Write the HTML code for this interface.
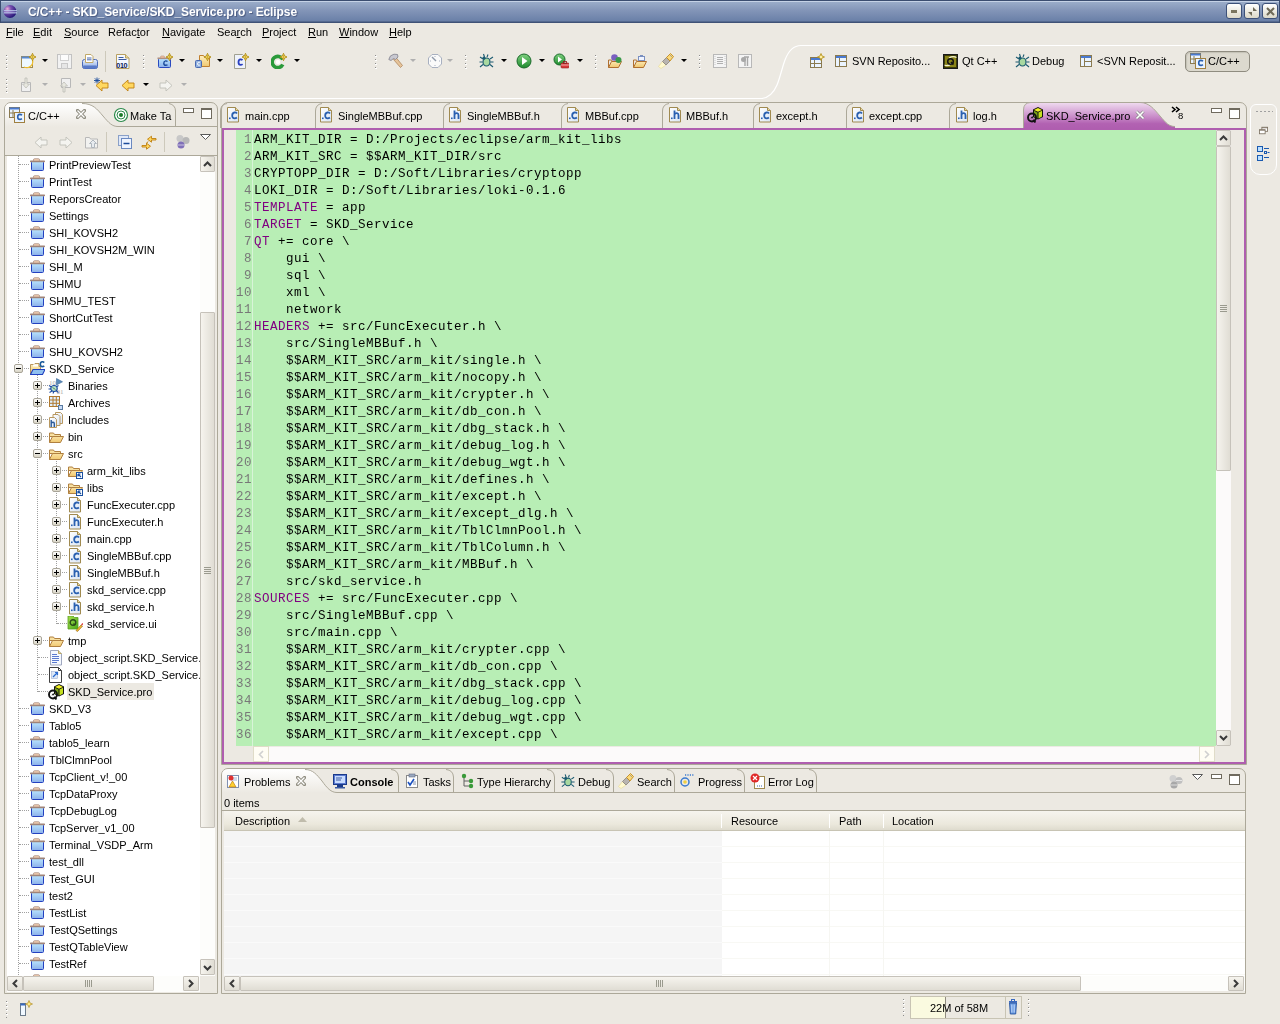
<!DOCTYPE html>
<html><head><meta charset="utf-8"><title>Eclipse</title><style>
*{margin:0;padding:0;box-sizing:border-box}
html,body{width:1280px;height:1024px;overflow:hidden;background:#ECE9E2;font-family:"Liberation Sans",sans-serif;font-size:11px;color:#000}
.a{position:absolute}
.t{position:absolute;white-space:pre;line-height:13px;will-change:transform}
.mono{font-family:"Liberation Mono",monospace;font-size:12.5px;letter-spacing:0.5px;line-height:17px}
.ln{color:#787878}
.kw{color:#800080}
.dd{position:absolute;width:0;height:0;border-left:3px solid transparent;border-right:3px solid transparent;border-top:3px solid #000}
.ddg{border-top-color:#b0b0b0}
.grip{position:absolute;width:2px;background:repeating-linear-gradient(transparent 0 1px,#8c8c8c 1px 2px,transparent 2px 4px),repeating-linear-gradient(transparent 0 2px,#fff 2px 3px,transparent 3px 4px);background-size:1px 100%,2px 100%;background-repeat:no-repeat}
.sep{position:absolute;width:1px;background:#cdc9bb}
.vbtn{position:absolute;background:linear-gradient(90deg,#f6f4ee,#e0ddd4);border:1px solid #c6c2ba;border-radius:1px}
.hbtn{position:absolute;background:linear-gradient(#f6f4ee,#e0ddd4);border:1px solid #c6c2ba;border-radius:1px}
.dots{position:absolute;border-left:1px dotted #a0a0a0}
.hdots{position:absolute;border-top:1px dotted #a0a0a0}
.minb{position:absolute;width:11px;height:5px;border:1px solid #6f6a5e;background:#fff}
.maxb{position:absolute;width:11px;height:11px;border:1px solid #6f6a5e;border-top-width:2px;background:#fff}
</style></head>
<body>
<svg width="0" height="0" style="position:absolute"><defs>
<linearGradient id="gBlue" x1="0" y1="0" x2="0" y2="1"><stop offset="0" stop-color="#b8e4ff"/><stop offset="1" stop-color="#8cb0ea"/></linearGradient>
<linearGradient id="gTan" x1="0" y1="0" x2="0" y2="1"><stop offset="0" stop-color="#fff0c0"/><stop offset="1" stop-color="#f0c870"/></linearGradient>
<linearGradient id="gPage" x1="0" y1="0" x2="1" y2="1"><stop offset="0" stop-color="#ffffff"/><stop offset="1" stop-color="#d8e4f4"/></linearGradient>
<linearGradient id="gBtn" x1="0" y1="0" x2="0" y2="1"><stop offset="0" stop-color="#ffffff"/><stop offset="1" stop-color="#d6d2c2"/></linearGradient>
<linearGradient id="gGreen" x1="0" y1="0" x2="0" y2="1"><stop offset="0" stop-color="#7fd07f"/><stop offset="1" stop-color="#1e8a2e"/></linearGradient>
<radialGradient id="gEcl" cx="0.3" cy="0.3" r="0.8"><stop offset="0" stop-color="#f0b0d8"/><stop offset="0.35" stop-color="#7a50b0"/><stop offset="1" stop-color="#1a1070"/></radialGradient>
<symbol id="proj" viewBox="0 0 16 16"><rect x="2.5" y="4.5" width="12" height="9" rx="1" fill="url(#gBlue)" stroke="#2340c0"/><rect x="1" y="3.6" width="15" height="1.6" rx="0.6" fill="#a08478"/><rect x="4.5" y="1.8" width="6" height="2.2" rx="1" fill="#fcd8b8" stroke="#a08478" stroke-width="0.8"/></symbol><symbol id="cproj" viewBox="0 0 16 16"><path d="M1.5 3.5h3.5l1-1h4v3h1.5v7.5h-10z" fill="url(#gTan)" stroke="#b08a50" stroke-width="0.9"/><path d="M4 3.5h5v2h-5z" fill="#fff"/><path d="M1.5 13.5L4 8.5H16L13.5 13.5Z" fill="#90c0f0" stroke="#2040c0" stroke-width="1.1" stroke-linejoin="round"/><path d="M15.2 1.6q-.8-.9-1.9-.8q-2 .2-2 2.5q0 2.3 2 2.3q1.1 0 1.9-.7" fill="none" stroke="#1a5a9a" stroke-width="1.6"/></symbol><symbol id="bin" viewBox="0 0 16 16"><text x="1" y="6.5" font-size="7" fill="#aaa" font-family="Liberation Serif">10</text><text x="8.5" y="15.5" font-size="7" fill="#aaa" font-family="Liberation Serif">01</text><path d="M8.5 0.5v6.5l6-3.2z" fill="#5a8ab8" stroke="#3a6a98" stroke-width="0.6"/><ellipse cx="6" cy="10.5" rx="3.2" ry="3" fill="#b8e0c8" stroke="#1a4aa0" stroke-width="1.2"/><path d="M1 7.5l2.5 1.5M0.5 11h2.5M1.5 14.5l2.5-1.5M10.5 7.5l-2 1.2M10.5 14.5l-2-1.5M5 15.5l.8-2" stroke="#1a4aa0" stroke-width="1.1"/><path d="M4.5 9.5l3 2" stroke="#508a60"/></symbol><symbol id="arch" viewBox="0 0 16 16"><rect x="1.5" y="1.5" width="10" height="10" fill="#dfeefc" stroke="#b07a30"/><path d="M5 1.5v10M8.3 1.5v10M1.5 5h10M1.5 8.3h10" stroke="#b07a30"/><rect x="10.5" y="10.5" width="4" height="4" fill="#c8dcf8" stroke="#5a7aa0"/></symbol><symbol id="inc" viewBox="0 0 16 16"><path d="M7.5 0.5h5l2 2v9h-7z" fill="url(#gPage)" stroke="#b89860"/><path d="M5 2.5h5l2 2v9H5z" fill="url(#gPage)" stroke="#b89860"/><path d="M1.5 5.5h5l2 2v8h-7z" fill="url(#gPage)" stroke="#b89860"/><path d="M3.2 8v7M3.2 11.2q.8-1 1.8-1q1.3 0 1.3 1.5V15" fill="none" stroke="#2a5a9a" stroke-width="1.4"/></symbol><symbol id="fold" viewBox="0 0 16 16"><path d="M1.5 4h4l1 1.5h6v2h-11z" fill="#f8e0a0" stroke="#b08040"/><path d="M1.5 4v9.5h11l3-6h-11l-3 6" fill="url(#gTan)" stroke="#b08040"/></symbol><symbol id="lfold" viewBox="0 0 16 16"><path d="M1.5 4h4l1 1.5h6v2h-11z" fill="#f8e0a0" stroke="#b08040"/><path d="M1.5 4v9.5h11l3-6h-11l-3 6" fill="url(#gTan)" stroke="#b08040"/><rect x="9.5" y="9.5" width="6" height="6" fill="#fff" stroke="#1a50a0"/><path d="M11 11l3 3M11 11h2.5M11 11v2.5" stroke="#1a50a0" stroke-width="1.2"/></symbol><symbol id="cfile" viewBox="0 0 16 16"><path d="M2.5 0.5h8l3 3v11.5h-11z" fill="url(#gPage)" stroke="#a08a50"/><path d="M10.5 0.5v3h3" fill="#e8d8a0" stroke="#a08a50"/><rect x="4" y="10.5" width="1.6" height="1.6" fill="#2a60b0"/><path d="M12 6.5q-1-1.2-2.5-1q-2.3.3-2.3 3q0 2.9 2.5 2.8q1.2 0 2.2-.8" fill="none" stroke="#2a60b0" stroke-width="1.8"/></symbol><symbol id="hfile" viewBox="0 0 16 16"><path d="M2.5 0.5h8l3 3v11.5h-11z" fill="url(#gPage)" stroke="#a08a50"/><path d="M10.5 0.5v3h3" fill="#e8d8a0" stroke="#a08a50"/><rect x="4" y="10.5" width="1.6" height="1.6" fill="#2a60b0"/><path d="M7.5 3.5v8.5M7.5 7.5q1-1.5 2.5-1.3q1.5.2 1.5 2v3.8" fill="none" stroke="#2a60b0" stroke-width="1.8"/></symbol><symbol id="ui" viewBox="0 0 16 16"><linearGradient id="gUi" x1="0" y1="0" x2="1" y2="1"><stop offset="0" stop-color="#a8e050"/><stop offset="1" stop-color="#48a818"/></linearGradient><path d="M1 0h5l1.5 1.5H11V13H1z" fill="url(#gUi)" stroke="#58a020" stroke-width="0.8"/><circle cx="6" cy="6.5" r="2.8" fill="none" stroke="#2a4a1a" stroke-width="1.4"/><path d="M6.5 7.5l1.5 1.5" stroke="#2a4a1a" stroke-width="1.2"/><path d="M9 14.5l5-5.5 1.5 1.2-5 5.3z" fill="#f0b830" stroke="#906010" stroke-width="0.6"/><path d="M14 8.5l1.5-1.5 1 1-1.5 1.5z" fill="#e04040"/></symbol><symbol id="doc" viewBox="0 0 16 16"><path d="M2.5 0.5h8l3 3v11.5h-11z" fill="#f4f8ff" stroke="#a0a8c0"/><path d="M10.5 0.5v3h3" fill="#e8d8a0" stroke="#c0a860"/><path d="M4 4.5h5M4 6.5h7M4 8.5h7M4 10.5h7M4 12.5h5" stroke="#5a7ad0"/></symbol><symbol id="doc2" viewBox="0 0 16 16"><path d="M1.5 0.5h9l3 3v12h-12z" fill="#fff" stroke="#404040"/><path d="M10.5 0.5v3h3" fill="none" stroke="#404040"/><rect x="3.5" y="4.5" width="6" height="7" fill="#dce8f8" stroke="#a0b0d0" stroke-width="0.6"/><path d="M5 10l4-4M7 5.5h2.5V8" fill="none" stroke="#2a6ad0" stroke-width="1.2"/></symbol><symbol id="pro" viewBox="0 0 16 16"><path d="M6 2.5L11 0L16 2.5V10L11 12.5L6 10Z" fill="#111"/><path d="M7 2.9L11 1L15 2.9L11 4.8Z" fill="#f0f020"/><path d="M7 3.7L10.5 5.5V11.5L7 9.6Z" fill="#78a018"/><path d="M11.5 5.5L15 3.7V9.6L11.5 11.5Z" fill="#c4e020"/><circle cx="5" cy="10.5" r="4" fill="none" stroke="#111" stroke-width="1.9"/><path d="M3.5 11.3l1.8-2.3 1 2.3z" fill="#111"/><path d="M6 13l2.5 2.5" stroke="#111" stroke-width="1.8"/></symbol><symbol id="plus" viewBox="0 0 9 9"><rect x="0.5" y="0.5" width="8" height="8" rx="1.5" fill="url(#gBtn)" stroke="#a8a498"/><path d="M2 4.5h5M4.5 2v5" stroke="#000"/></symbol><symbol id="minus" viewBox="0 0 9 9"><rect x="0.5" y="0.5" width="8" height="8" rx="1.5" fill="url(#gBtn)" stroke="#a8a498"/><path d="M2 4.5h5" stroke="#000"/></symbol><symbol id="eclipse" viewBox="0 0 14 13"><circle cx="7" cy="6.5" r="6.5" fill="url(#gEcl)"/><rect x="1" y="5.2" width="13" height="1.1" fill="#c0d0f0"/><rect x="1" y="7.3" width="13" height="1.1" fill="#c0d0f0"/></symbol><symbol id="ccpersp" viewBox="0 0 16 16"><rect x="0.5" y="0.5" width="10" height="10" fill="#eaf4ff" stroke="#8a7a50"/><rect x="0.5" y="0.5" width="10" height="2" fill="#4a7ad0"/><path d="M4 3v7.5M0.5 6h10" stroke="#8a7a50"/><rect x="5.5" y="5.5" width="10" height="10" fill="#eaf4ff" stroke="#a08040"/><path d="M13 8.3q-1-1-2.3-.9q-2 .2-2 2.6q0 2.4 2.2 2.4q1.1 0 2-.7" fill="none" stroke="#2a60b0" stroke-width="1.6"/></symbol><symbol id="svn" viewBox="0 0 16 16"><rect x="1.5" y="2.5" width="11" height="11" fill="#eaf4ff" stroke="#8a7a50"/><rect x="2" y="3" width="10" height="2" fill="#4a7ad0"/><path d="M5.5 5v8.5M5.5 8.5h7" stroke="#8a7a50"/></symbol><symbol id="newpersp" viewBox="0 0 16 16"><rect x="1.5" y="4.5" width="11" height="10" fill="#eaf4ff" stroke="#8a7a50"/><rect x="2" y="5" width="10" height="2" fill="#4a7ad0"/><path d="M5.5 7v7.5M1.5 10.5h11" stroke="#8a7a50"/><path d="M12 0.5L13 3L15.5 4L13 5L12 7.5L11 5L8.5 4L11 3Z" fill="#fff0a0" stroke="#b08a10" stroke-width="0.8" stroke-linejoin="round"/></symbol><symbol id="qt" viewBox="0 0 16 16"><rect x="0.5" y="1.5" width="14" height="14" fill="#3a3a08" stroke="#1a1a1a"/><rect x="2" y="3" width="11" height="11" fill="#8a8418"/><path d="M1.5 12Q5 14 9 10M6 5Q10 2.5 13.5 4.5" stroke="#f0f0d0" stroke-width="1.2" fill="none"/><circle cx="7.5" cy="8.5" r="2.8" fill="none" stroke="#111" stroke-width="1.5"/><path d="M8 9l2.5 2.5" stroke="#111" stroke-width="1.5"/></symbol><symbol id="bug" viewBox="0 0 17 16"><ellipse cx="8.5" cy="9" rx="3.5" ry="4" fill="#a8d8a0" stroke="#1a5a70" stroke-width="1.2"/><circle cx="6" cy="5" r="1.6" fill="#1a5a70"/><path d="M2 4l3 2M1.5 9h3M2 14l3-2.5M15 4l-3 2M15.5 9h-3M15 14l-3-2.5M5.5 1l1 3M10 1.5l-1 2.5" stroke="#1a5a70" stroke-width="1.1"/></symbol><symbol id="run" viewBox="0 0 16 16"><circle cx="8" cy="8" r="7" fill="url(#gGreen)" stroke="#1a6a2a"/><path d="M6 4l5.5 4-5.5 4z" fill="#fff"/></symbol><symbol id="runext" viewBox="0 0 16 16"><circle cx="6.5" cy="6.5" r="5.5" fill="url(#gGreen)" stroke="#1a6a2a"/><path d="M5 3.5l4 3-4 3z" fill="#fff"/><rect x="8" y="10" width="8" height="5" rx="1" fill="#d83838" stroke="#902020" stroke-width="0.6"/><rect x="10.5" y="8.5" width="3" height="2" fill="none" stroke="#902020" stroke-width="0.8"/><path d="M8 12h8" stroke="#fff" stroke-width="0.6"/></symbol><symbol id="upgray" viewBox="0 0 16 16"><path d="M1.5 3.5h4l1 1.5h7v9h-12z" fill="#f2f2f0" stroke="#b8b8b8"/><path d="M9 6l-3.5 3.5h2v4h3v-4h2z" fill="#e8ecf0" stroke="#a8b0b8" stroke-width="0.9"/></symbol><symbol id="opentype" viewBox="0 0 16 16"><path d="M1.5 7v7.5h10l3-6h-10l-3 6" fill="url(#gTan)" stroke="#b07030"/><path d="M1.5 7h3l1 1.5" fill="none" stroke="#b07030"/><circle cx="7.5" cy="4.5" r="3.3" fill="#7a60c0"/><circle cx="11.5" cy="7" r="3" fill="#3a9a4a"/></symbol><symbol id="openres" viewBox="0 0 16 16"><path d="M1.5 7v7.5h10l3-6h-10l-3 6" fill="url(#gTan)" stroke="#b07030"/><path d="M1.5 7h3l1 1.5" fill="none" stroke="#b07030"/><rect x="6.5" y="3.5" width="6" height="4" fill="#f0f4ff" stroke="#7a90c0"/><rect x="8" y="2" width="3" height="1.5" fill="#7a90c0"/></symbol><symbol id="search" viewBox="0 0 16 16"><path d="M0.5 13.5L4.5 8.5L8 12L3 15.5Z" fill="#fffad0" stroke="#e8d890" stroke-width="0.6"/><path d="M4.5 8.5L8.5 4.5L12 8L8 12Z" fill="#b8b4b0" stroke="#8a847a" stroke-width="0.8" stroke-linejoin="round"/><path d="M8.5 4.5L12.5 0.5L15.5 3.5L12 8Z" fill="#fcd878" stroke="#c08a20" stroke-width="0.9" stroke-linejoin="round"/><path d="M12.5 2.5l1 1" stroke="#3a60b0" stroke-width="0.9"/></symbol><symbol id="savegray" viewBox="0 0 16 16"><rect x="0.5" y="1.5" width="14" height="14" fill="#f2f2f2" stroke="#c2c2c2"/><rect x="3.5" y="1.5" width="8" height="6" fill="#fcfcfc" stroke="#d0d0d0"/><rect x="4.5" y="10.5" width="6" height="5" fill="#e6e6e6" stroke="#c8c8c8"/></symbol><symbol id="print" viewBox="0 0 16 16"><linearGradient id="gPr" x1="0" y1="0" x2="0" y2="1"><stop offset="0" stop-color="#e8f0ff"/><stop offset="1" stop-color="#8aa8e0"/></linearGradient><rect x="0.5" y="6.5" width="15" height="9" rx="2" fill="url(#gPr)" stroke="#4a6ab8"/><path d="M3.5 1.5h5.5l2 2v6h-7.5z" fill="#fff" stroke="#c0a868"/><path d="M5 5h4.5M5 6.8h4.5" stroke="#4a6ab0"/><rect x="1" y="12.5" width="14" height="3" rx="1" fill="#5a7ac8"/></symbol><symbol id="bin010" viewBox="0 0 16 16"><path d="M0.5 1.5h9l3.5 3.5v10.5h-12.5z" fill="#f4f8ff" stroke="#b8a060"/><path d="M9.5 1.5v3.5h3.5" fill="#e8d8a0" stroke="#b8a060"/><path d="M2.5 4.5h5M2.5 6.5h8" stroke="#3a5aa0"/><text x="0.3" y="15" font-size="7.2" font-weight="bold" fill="#0a1a5a" font-family="Liberation Sans" letter-spacing="-0.4">010</text></symbol><symbol id="newwiz" viewBox="0 0 16 16"><rect x="1.5" y="3.5" width="11" height="11" fill="#eef8ff" stroke="#a08a50"/><rect x="1.5" y="3.5" width="11" height="2" fill="#5a8ad0"/><path d="M12.5 7a6 6 0 0 1-8.5 7" fill="none" stroke="#f0c030" stroke-width="1.2"/><path d="M12.5 0.3L13.6 2.9L16 4L13.6 5.1L12.5 7.7L11.4 5.1L9 4L11.4 2.9Z" fill="#fff0a0" stroke="#b08a10" stroke-width="0.9" stroke-linejoin="round"/><path d="M12.5 2v4M10.5 4h4" stroke="#d0a820" stroke-width="0.8"/></symbol><symbol id="newcproj" viewBox="0 0 16 16"><rect x="1.5" y="5.5" width="12" height="9" rx="1" fill="url(#gBlue)" stroke="#2a4ac0"/><rect x="0.5" y="4.5" width="14" height="1.6" fill="#b09080"/><rect x="3.5" y="3" width="4" height="2" rx="1" fill="#f8c0a0" stroke="#b09080" stroke-width="0.6"/><path d="M10.5 8.6q-.8-.8-1.9-.7q-1.8.2-1.8 2.3q0 2.1 1.9 2.1q1 0 1.8-.6" fill="none" stroke="#1a4a9a" stroke-width="1.4"/><path d="M12.5 0.3L13.6 2.9L16 4L13.6 5.1L12.5 7.7L11.4 5.1L9 4L11.4 2.9Z" fill="#fff0a0" stroke="#b08a10" stroke-width="0.9" stroke-linejoin="round"/><path d="M12.5 2v4M10.5 4h4" stroke="#d0a820" stroke-width="0.8"/></symbol><symbol id="newfold" viewBox="0 0 16 16"><path d="M4.5 2.5h4l1 1.5h5v9.5h-10z" fill="url(#gTan)" stroke="#c08030"/><rect x="0.5" y="7.5" width="6" height="7" rx="1" fill="#90b0e0" stroke="#4a6ab0"/><path d="M5 9.6q-.5-.5-1.2-.4q-1.2.1-1.2 1.6q0 1.5 1.2 1.5q.7 0 1.2-.4" fill="none" stroke="#fff" stroke-width="1"/><path d="M12.5 0.3L13.6 2.9L16 4L13.6 5.1L12.5 7.7L11.4 5.1L9 4L11.4 2.9Z" fill="#fff0a0" stroke="#b08a10" stroke-width="0.9" stroke-linejoin="round"/><path d="M12.5 2v4M10.5 4h4" stroke="#d0a820" stroke-width="0.8"/></symbol><symbol id="newcfile" viewBox="0 0 16 16"><path d="M1.5 1.5h8l3 3v11h-11z" fill="#eef2fa" stroke="#a0a090"/><path d="M9.5 7.2q-.9-.9-2-.8q-2 .2-2 2.8q0 2.6 2.1 2.6q1.1 0 2-.7" fill="none" stroke="#2a40c0" stroke-width="1.8"/><path d="M12.5 0.3L13.6 2.9L16 4L13.6 5.1L12.5 7.7L11.4 5.1L9 4L11.4 2.9Z" fill="#fff0a0" stroke="#b08a10" stroke-width="0.9" stroke-linejoin="round"/><path d="M12.5 2v4M10.5 4h4" stroke="#d0a820" stroke-width="0.8"/></symbol><symbol id="newclass" viewBox="0 0 16 16"><path d="M11.8 6.5A5.6 5.6 0 1 0 11.8 11.5" fill="none" stroke="#2a9a3a" stroke-width="3.6"/><circle cx="7" cy="9" r="2.2" fill="#fff"/><path d="M12.5 0.3L13.6 2.9L16 4L13.6 5.1L12.5 7.7L11.4 5.1L9 4L11.4 2.9Z" fill="#fff0a0" stroke="#b08a10" stroke-width="0.9" stroke-linejoin="round"/><path d="M12.5 2v4M10.5 4h4" stroke="#d0a820" stroke-width="0.8"/></symbol><symbol id="hammer" viewBox="0 0 16 16"><path d="M5.5 6.5L8 4.5L14.5 12.5L12.5 14.5Z" fill="#e6c49a" stroke="#b08860" stroke-width="0.8" stroke-linejoin="round"/><path d="M0.8 6.5Q1.5 2 6 1.2L9.5 1.5L10 4L7.5 6.5L5.5 5.5L3 7.5Z" fill="#c8c8d0" stroke="#80808c" stroke-width="0.8" stroke-linejoin="round"/></symbol><symbol id="clock" viewBox="0 0 16 16"><path d="M5 1.5h6l3.5 3.5v6l-3.5 3.5h-6l-3.5-3.5v-6z" fill="#fafafa" stroke="#a8b0c0"/><path d="M5 4l4 4" stroke="#909aaa" stroke-width="1.4"/><path d="M8 3v1M8 12v1M3 8h1M12 8h1" stroke="#a8b0c0"/></symbol><symbol id="dimpage" viewBox="0 0 16 16"><rect x="1.5" y="1.5" width="13" height="13" fill="#f4f4f4" stroke="#b8b8b8"/><path d="M5 4.5h6M5 6.5h6M5 8.5h6M5 10.5h6" stroke="#b0b0b0" stroke-width="1.2"/><path d="M3 3v10M13 3v10" stroke="#c8c8c8" stroke-dasharray="1 1"/></symbol><symbol id="pilcrow" viewBox="0 0 16 16"><rect x="1.5" y="1.5" width="13" height="13" fill="#f4f4f4" stroke="#b8b8b8"/><path d="M7 4h5M8 4v9M10.5 4v9" stroke="#a8a8a8" stroke-width="1.4"/><circle cx="6.5" cy="6.5" r="2.5" fill="#a8a8a8"/></symbol><symbol id="backast" viewBox="0 0 16 16"><path d="M8 3v3h6v5H8v3L2 8.5z" fill="#ffd860" stroke="#c08010" stroke-width="0.9"/><path d="M3 0.5v6M0 3.5h6M0.8 1.3l4.4 4.4M0.8 5.7l4.4-4.4" stroke="#1a4a9a" stroke-width="0.9"/></symbol><symbol id="back" viewBox="0 0 16 16"><path d="M8 3v3h6v5H8v3L2 8.5z" fill="#ffd860" stroke="#c08010" stroke-width="0.9"/></symbol><symbol id="fwdgray" viewBox="0 0 16 16"><path d="M8 3v3H2v5h6v3l6-5.5z" fill="#f4f4f0" stroke="#c0c0b8" stroke-width="0.9"/></symbol><symbol id="backgray" viewBox="0 0 16 16"><path d="M8 3v3h6v5H8v3L2 8.5z" fill="#f4f4f0" stroke="#c0c0b8" stroke-width="0.9"/></symbol><symbol id="nextann" viewBox="0 0 16 16"><path d="M2.5 5.5h9v9h-9z" fill="#f0f0f0" stroke="#b8b8b8"/><path d="M6 1v6H3.5L7 11l3.5-4H8V1z" fill="#e8e8e0" stroke="#b8b8b0" stroke-width="0.7"/></symbol><symbol id="prevann" viewBox="0 0 16 16"><path d="M4.5 1.5h9v9h-9z" fill="#f0f0f0" stroke="#b8b8b8"/><path d="M6 15V9H3.5L7 5l3.5 4H8v6z" fill="#e8e8e0" stroke="#b8b8b0" stroke-width="0.7"/></symbol><symbol id="collapse" viewBox="0 0 16 16"><rect x="1.5" y="1.5" width="10" height="10" fill="#dfe8f8" stroke="#8aa0c8"/><rect x="4.5" y="4.5" width="10" height="10" fill="#eef4ff" stroke="#6a88c0"/><path d="M6.5 9.5h6" stroke="#1a4a9a" stroke-width="1.5"/></symbol><symbol id="link" viewBox="0 0 16 16"><path d="M15 4.5H10.5V2.2L6.5 5.2L10.5 8.2V6H15Z" fill="#ffd860" stroke="#c08010" stroke-width="0.9" stroke-linejoin="round"/><path d="M1 11.5H5.5V9.2L9.5 12.2L5.5 15.2V13H1Z" fill="#ffd860" stroke="#c08010" stroke-width="0.9" stroke-linejoin="round"/><path d="M7 7.5L5.5 9.5" stroke="#c08010"/></symbol><symbol id="balls" viewBox="0 0 16 16"><circle cx="5" cy="4.5" r="3.5" fill="#c8c8c8"/><circle cx="11" cy="6.5" r="3.5" fill="#b8b8b8"/><circle cx="6" cy="11" r="3.5" fill="#8070b8"/><path d="M3 11h6" stroke="#fff" stroke-width="0.6"/></symbol><symbol id="ballsgray" viewBox="0 0 16 16"><circle cx="5" cy="4.5" r="3.5" fill="#d0d0d0"/><circle cx="11" cy="6.5" r="3.5" fill="#c0c0c0"/><circle cx="6" cy="11" r="3.5" fill="#a8a8a8"/><path d="M3 11h6M8 6.5h6" stroke="#fff" stroke-width="0.6"/></symbol><symbol id="maketarget" viewBox="0 0 16 16"><circle cx="8" cy="8" r="6.5" fill="#fff" stroke="#2a8a4a" stroke-width="1.2"/><circle cx="8" cy="8" r="4" fill="none" stroke="#2a8a4a"/><circle cx="8" cy="8" r="2" fill="#1a7a2a"/></symbol><symbol id="problems" viewBox="0 0 16 16"><rect x="1.5" y="2.5" width="11" height="12" fill="#fff" stroke="#8090b0"/><path d="M5 5h6M5 7h6" stroke="#a0b0d0"/><circle cx="5" cy="5" r="2.5" fill="#e03030"/><path d="M3 14l3.5-6 3.5 6z" fill="#ffd030" stroke="#c08010" stroke-width="0.7"/></symbol><symbol id="console" viewBox="0 0 16 16"><rect x="1.5" y="1.5" width="13" height="10" fill="#5a7ad0" stroke="#1a3a8a"/><rect x="3" y="3" width="10" height="7" fill="#c8dcff"/><path d="M4 5h6M4 7h5" stroke="#1a3a8a" stroke-width="0.8"/><rect x="5" y="12" width="6" height="2" fill="#1a3a8a"/><rect x="3" y="14" width="10" height="1.5" fill="#3a5aa0"/></symbol><symbol id="tasks" viewBox="0 0 16 16"><rect x="2.5" y="2.5" width="11" height="12" fill="#fff" stroke="#8a8a8a"/><rect x="5" y="1" width="6" height="3" fill="#9aa8c0" stroke="#606a80" stroke-width="0.6"/><path d="M4 9l2 3 4-6" fill="none" stroke="#1a50c0" stroke-width="1.6"/><path d="M9 9h3M9 11h3" stroke="#8090b0"/></symbol><symbol id="typeh" viewBox="0 0 16 16"><circle cx="4" cy="3" r="2.2" fill="#3a9a3a"/><circle cx="11" cy="8" r="2.2" fill="#3a9a3a"/><circle cx="11" cy="13" r="2.2" fill="#3a9a3a"/><path d="M4 5v8h5M4 8h5" fill="none" stroke="#606060"/></symbol><symbol id="progress" viewBox="0 0 16 16"><circle cx="6" cy="9" r="4" fill="none" stroke="#3a7ad0" stroke-width="1.5"/><circle cx="6" cy="9" r="1.8" fill="#f0d040"/><path d="M6 2h9" stroke="#3a7ad0" stroke-dasharray="1.2 1.2" stroke-width="1.5"/></symbol><symbol id="errlog" viewBox="0 0 16 16"><rect x="4.5" y="3.5" width="10" height="12" fill="#fff" stroke="#a08a50"/><circle cx="5" cy="5" r="4.5" fill="#e02828"/><path d="M3 3l4 4M7 3l-4 4" stroke="#fff" stroke-width="1.2"/><path d="M7 13h6" stroke="#3a6ab0" stroke-dasharray="1 1"/></symbol><symbol id="trash" viewBox="0 0 12 16"><rect x="2" y="2" width="8" height="1.8" fill="#3a6ac0"/><rect x="4.5" y="0.5" width="3" height="2" fill="none" stroke="#3a6ac0"/><path d="M2.5 4h7l-.8 11h-5.4z" fill="#6a9ae0" stroke="#1a4a9a" stroke-width="0.8"/><path d="M4.5 5.5v8M6 5.5v8M7.5 5.5v8" stroke="#d0e4ff" stroke-width="0.6"/></symbol><symbol id="fastview" viewBox="0 0 16 16"><rect x="1.5" y="3.5" width="5" height="12" fill="#f0f8ff" stroke="#6a7a8a"/><rect x="1.5" y="3.5" width="5" height="2" fill="#3a6ac0"/><path d="M10 0.5l1 2.5 2.5 1-2.5 1-1 2.5-1-2.5-2.5-1 2.5-1z" fill="#ffe880" stroke="#a88010" stroke-width="0.6"/></symbol><symbol id="restore" viewBox="0 0 11 9"><rect x="3.5" y="0.5" width="7" height="5" fill="#fff" stroke="#7a7060"/><rect x="0.5" y="3.5" width="7" height="5" fill="#fff" stroke="#7a7060"/><path d="M3.5 1.2h7M0.5 4.2h7" stroke="#7a7060"/></symbol><symbol id="outline" viewBox="0 0 16 16"><rect x="1.5" y="1.5" width="5" height="5" fill="#bce0ff" stroke="#1a5ab0"/><rect x="1.5" y="10.5" width="5" height="5" fill="#bce0ff" stroke="#1a5ab0"/><rect x="8.5" y="6.5" width="2" height="2" fill="none" stroke="#1a5ab0"/><path d="M8 3.5h5M11.5 7.5h2M8 12.5h5" stroke="#1a5ab0"/></symbol></defs></svg>
<div class="a" style="left:0;top:0;width:1280px;height:23px;background:linear-gradient(#3b4d70 0 1px,#c5d2e6 1px 2px,#9aacc9 2px,#8395b8 45%,#6a80a8 21px,#3f5276 22px)"></div><div class="a" style="left:0;top:0;width:1px;height:23px;background:#3b4d70"></div><div class="a" style="left:1279px;top:0;width:1px;height:23px;background:#3b4d70"></div><svg class="a" style="left:3px;top:5px;" width="14" height="13"><use href="#eclipse"/></svg><div class="t" style="left:28px;top:5px;color:#fff;font-weight:bold;font-size:12px;letter-spacing:-0.1px;line-height:14px;text-shadow:1px 1px 1px #4a5a80">C/C++ - SKD_Service/SKD_Service.pro - Eclipse</div><div class="a" style="left:1226px;top:3px;width:16px;height:16px;border:1px solid #3c5078;border-radius:3px;background:linear-gradient(#ffffff,#dcd8c8)"></div><div class="a" style="left:1244px;top:3px;width:16px;height:16px;border:1px solid #3c5078;border-radius:3px;background:linear-gradient(#ffffff,#dcd8c8)"></div><div class="a" style="left:1262px;top:3px;width:16px;height:16px;border:1px solid #3c5078;border-radius:3px;background:linear-gradient(#ffffff,#dcd8c8)"></div><div class="a" style="left:1231px;top:10px;width:6px;height:3px;background:#7a7560"></div><svg class="a" style="left:1248px;top:7px" width="9" height="9"><path d="M5 0v4h4zM4 9V5H0z" fill="#6f6a58"/></svg><svg class="a" style="left:1266px;top:7px" width="9" height="9"><path d="M1 1l7 7M8 1l-7 7" stroke="#6f6a58" stroke-width="2"/></svg><div class="t" style="left:6px;top:26px"><span style="text-decoration:underline;text-underline-offset:1px">F</span>ile</div><div class="t" style="left:33px;top:26px"><span style="text-decoration:underline;text-underline-offset:1px">E</span>dit</div><div class="t" style="left:64px;top:26px"><span style="text-decoration:underline;text-underline-offset:1px">S</span>ource</div><div class="t" style="left:108px;top:26px">Refac<span style="text-decoration:underline;text-underline-offset:1px">t</span>or</div><div class="t" style="left:162px;top:26px"><span style="text-decoration:underline;text-underline-offset:1px">N</span>avigate</div><div class="t" style="left:217px;top:26px">Sea<span style="text-decoration:underline;text-underline-offset:1px">r</span>ch</div><div class="t" style="left:262px;top:26px"><span style="text-decoration:underline;text-underline-offset:1px">P</span>roject</div><div class="t" style="left:308px;top:26px"><span style="text-decoration:underline;text-underline-offset:1px">R</span>un</div><div class="t" style="left:339px;top:26px"><span style="text-decoration:underline;text-underline-offset:1px">W</span>indow</div><div class="t" style="left:389px;top:26px"><span style="text-decoration:underline;text-underline-offset:1px">H</span>elp</div><div class="grip" style="left:6px;top:54px;height:16px"></div><div class="grip" style="left:143px;top:54px;height:16px"></div><div class="grip" style="left:375px;top:54px;height:16px"></div><div class="grip" style="left:465px;top:54px;height:16px"></div><div class="grip" style="left:595px;top:54px;height:16px"></div><div class="grip" style="left:699px;top:54px;height:16px"></div><svg class="a" style="left:20px;top:53px;" width="16" height="16"><use href="#newwiz"/></svg><div class="dd" style="left:42px;top:59px"></div><svg class="a" style="left:57px;top:53px;" width="16" height="16"><use href="#savegray"/></svg><svg class="a" style="left:82px;top:53px;" width="16" height="16"><use href="#print"/></svg><div class="sep" style="left:105px;top:51px;height:21px"></div><svg class="a" style="left:116px;top:53px;" width="16" height="16"><use href="#bin010"/></svg><svg class="a" style="left:157px;top:53px;" width="16" height="16"><use href="#newcproj"/></svg><div class="dd" style="left:179px;top:59px"></div><svg class="a" style="left:195px;top:53px;" width="16" height="16"><use href="#newfold"/></svg><div class="dd" style="left:217px;top:59px"></div><svg class="a" style="left:233px;top:53px;" width="16" height="16"><use href="#newcfile"/></svg><div class="dd" style="left:256px;top:59px"></div><svg class="a" style="left:271px;top:53px;" width="16" height="16"><use href="#newclass"/></svg><div class="dd" style="left:294px;top:59px"></div><svg class="a" style="left:388px;top:53px;" width="16" height="16"><use href="#hammer"/></svg><div class="dd ddg" style="left:410px;top:59px"></div><svg class="a" style="left:427px;top:53px;" width="16" height="16"><use href="#clock"/></svg><div class="dd ddg" style="left:447px;top:59px"></div><svg class="a" style="left:478px;top:53px;" width="17" height="16"><use href="#bug"/></svg><div class="dd" style="left:501px;top:59px"></div><svg class="a" style="left:516px;top:53px;" width="16" height="16"><use href="#run"/></svg><div class="dd" style="left:539px;top:59px"></div><svg class="a" style="left:553px;top:53px;" width="16" height="16"><use href="#runext"/></svg><div class="dd" style="left:577px;top:59px"></div><svg class="a" style="left:607px;top:53px;" width="16" height="16"><use href="#opentype"/></svg><svg class="a" style="left:632px;top:53px;" width="16" height="16"><use href="#openres"/></svg><svg class="a" style="left:658px;top:53px;" width="16" height="16"><use href="#search"/></svg><div class="dd" style="left:681px;top:59px"></div><svg class="a" style="left:712px;top:53px;" width="16" height="16"><use href="#dimpage"/></svg><svg class="a" style="left:737px;top:53px;" width="16" height="16"><use href="#pilcrow"/></svg><div class="grip" style="left:6px;top:78px;height:16px"></div><svg class="a" style="left:19px;top:77px;" width="16" height="16"><use href="#nextann"/></svg><div class="dd ddg" style="left:42px;top:83px"></div><svg class="a" style="left:57px;top:77px;" width="16" height="16"><use href="#prevann"/></svg><div class="dd ddg" style="left:80px;top:83px"></div><svg class="a" style="left:94px;top:77px;" width="16" height="16"><use href="#backast"/></svg><svg class="a" style="left:120px;top:77px;" width="16" height="16"><use href="#back"/></svg><div class="dd" style="left:143px;top:83px"></div><svg class="a" style="left:158px;top:77px;" width="16" height="16"><use href="#fwdgray"/></svg><div class="dd ddg" style="left:181px;top:83px"></div><svg class="a" style="left:760px;top:43px" width="520" height="58"><path d="M0 55.5 L2 55.5 C 9 54.5, 14 49, 17 42 C 20 35, 22 25, 25 17 C 28 9, 33 2.5, 41 2.5 L 520 2.5" fill="none" stroke="#fff" stroke-width="1.2"/></svg><div class="a" style="left:0;top:98px;width:762px;height:1px;background:#fff"></div><svg class="a" style="left:809px;top:53px;" width="16" height="16"><use href="#newpersp"/></svg><svg class="a" style="left:834px;top:53px;" width="16" height="16"><use href="#svn"/></svg><div class="t" style="left:852px;top:55px">SVN Reposito...</div><svg class="a" style="left:943px;top:53px;" width="16" height="16"><use href="#qt"/></svg><div class="t" style="left:962px;top:55px">Qt C++</div><svg class="a" style="left:1014px;top:53px;" width="17" height="16"><use href="#bug"/></svg><div class="t" style="left:1032px;top:55px">Debug</div><svg class="a" style="left:1079px;top:53px;" width="16" height="16"><use href="#svn"/></svg><div class="t" style="left:1097px;top:55px">&lt;SVN Reposit...</div><div class="a" style="left:1185px;top:51px;width:65px;height:21px;border:1px solid #8f8c80;border-radius:5px;background:#dcd9ce;box-shadow:inset 1px 1px 1px #c4c1b6"></div><svg class="a" style="left:1190px;top:53px;" width="16" height="16"><use href="#ccpersp"/></svg><div class="t" style="left:1208px;top:55px">C/C++</div><div class="a" style="left:4px;top:102px;width:214px;height:892px;border:1px solid #aca899;border-radius:7px 7px 0 0"></div><svg class="a" style="left:5px;top:103px" width="212" height="25"><defs><linearGradient id="tabw" x1="0" y1="0" x2="0" y2="1"><stop offset="0" stop-color="#ffffff"/><stop offset="1" stop-color="#ECE9E2"/></linearGradient></defs><path d="M0 24 V6 Q0 0 7 0 H77 C 88 0, 92 6, 98 13 C 104 20, 107 24, 113 24 Z" fill="url(#tabw)"/><path d="M77 0.5 C 88 0.5, 92 6, 98 13 C 104 20, 107 23.5, 113 23.5 H212" fill="none" stroke="#aca899"/><path d="M170.5 24V8 Q170.5 2 164 0.5" fill="none" stroke="#aca899"/></svg><svg class="a" style="left:9px;top:107px;" width="16" height="16"><use href="#ccpersp"/></svg><div class="t" style="left:28px;top:110px">C/C++</div><svg class="a" style="left:76px;top:109px" width="10" height="10"><path d="M1.5 1.5l7 7M8.5 1.5l-7 7" stroke="#8f8d80" stroke-width="3.2" stroke-linecap="square"/><path d="M1.5 1.5l7 7M8.5 1.5l-7 7" stroke="#fff" stroke-width="1.3"/></svg><svg class="a" style="left:113px;top:107px;" width="16" height="16"><use href="#maketarget"/></svg><div class="t" style="left:130px;top:110px">Make Ta</div><div class="minb" style="left:183px;top:108px"></div><div class="maxb" style="left:201px;top:108px"></div><svg class="a" style="left:33px;top:134px;" width="16" height="16"><use href="#backgray"/></svg><svg class="a" style="left:58px;top:134px;" width="16" height="16"><use href="#fwdgray"/></svg><svg class="a" style="left:84px;top:134px;" width="16" height="16"><use href="#upgray"/></svg><div class="sep" style="left:106px;top:132px;height:20px"></div><svg class="a" style="left:117px;top:134px;" width="16" height="16"><use href="#collapse"/></svg><svg class="a" style="left:141px;top:134px;" width="16" height="16"><use href="#link"/></svg><div class="sep" style="left:164px;top:132px;height:20px"></div><svg class="a" style="left:175px;top:134px;" width="16" height="16"><use href="#balls"/></svg><svg class="a" style="left:200px;top:134px" width="11" height="6"><path d="M0.5 0.5h10l-5 5z" fill="#fff" stroke="#5a5a5a"/></svg><div class="a" style="left:5px;top:155px;width:213px;height:1px;background:#aca899"></div><div class="a" style="left:7px;top:156px;width:193px;height:820px;background:#fff;overflow:hidden" id="tree"><div class="dots" style="left:11px;top:0;height:819px"></div><div class="dots" style="left:30px;top:217px;height:319px"></div><div class="dots" style="left:49px;top:302px;height:166px"></div><div class="hdots" style="left:12px;top:8px;width:10px"></div><svg class="a" style="left:22px;top:1px;" width="16" height="16"><use href="#proj"/></svg><div class="t" style="left:42px;top:3px">PrintPreviewTest</div><div class="hdots" style="left:12px;top:25px;width:10px"></div><svg class="a" style="left:22px;top:18px;" width="16" height="16"><use href="#proj"/></svg><div class="t" style="left:42px;top:20px">PrintTest</div><div class="hdots" style="left:12px;top:42px;width:10px"></div><svg class="a" style="left:22px;top:35px;" width="16" height="16"><use href="#proj"/></svg><div class="t" style="left:42px;top:37px">ReporsCreator</div><div class="hdots" style="left:12px;top:59px;width:10px"></div><svg class="a" style="left:22px;top:52px;" width="16" height="16"><use href="#proj"/></svg><div class="t" style="left:42px;top:54px">Settings</div><div class="hdots" style="left:12px;top:76px;width:10px"></div><svg class="a" style="left:22px;top:69px;" width="16" height="16"><use href="#proj"/></svg><div class="t" style="left:42px;top:71px">SHI_KOVSH2</div><div class="hdots" style="left:12px;top:93px;width:10px"></div><svg class="a" style="left:22px;top:86px;" width="16" height="16"><use href="#proj"/></svg><div class="t" style="left:42px;top:88px">SHI_KOVSH2M_WIN</div><div class="hdots" style="left:12px;top:110px;width:10px"></div><svg class="a" style="left:22px;top:103px;" width="16" height="16"><use href="#proj"/></svg><div class="t" style="left:42px;top:105px">SHI_M</div><div class="hdots" style="left:12px;top:127px;width:10px"></div><svg class="a" style="left:22px;top:120px;" width="16" height="16"><use href="#proj"/></svg><div class="t" style="left:42px;top:122px">SHMU</div><div class="hdots" style="left:12px;top:144px;width:10px"></div><svg class="a" style="left:22px;top:137px;" width="16" height="16"><use href="#proj"/></svg><div class="t" style="left:42px;top:139px">SHMU_TEST</div><div class="hdots" style="left:12px;top:161px;width:10px"></div><svg class="a" style="left:22px;top:154px;" width="16" height="16"><use href="#proj"/></svg><div class="t" style="left:42px;top:156px">ShortCutTest</div><div class="hdots" style="left:12px;top:178px;width:10px"></div><svg class="a" style="left:22px;top:171px;" width="16" height="16"><use href="#proj"/></svg><div class="t" style="left:42px;top:173px">SHU</div><div class="hdots" style="left:12px;top:195px;width:10px"></div><svg class="a" style="left:22px;top:188px;" width="16" height="16"><use href="#proj"/></svg><div class="t" style="left:42px;top:190px">SHU_KOVSH2</div><div class="hdots" style="left:12px;top:212px;width:10px"></div><svg class="a" style="left:22px;top:205px;" width="16" height="16"><use href="#cproj"/></svg><svg class="a" style="left:7px;top:208px;" width="9" height="9"><use href="#minus"/></svg><div class="t" style="left:42px;top:207px">SKD_Service</div><div class="hdots" style="left:31px;top:229px;width:10px"></div><svg class="a" style="left:41px;top:222px;" width="16" height="16"><use href="#bin"/></svg><svg class="a" style="left:26px;top:225px;" width="9" height="9"><use href="#plus"/></svg><div class="t" style="left:61px;top:224px">Binaries</div><div class="hdots" style="left:31px;top:246px;width:10px"></div><svg class="a" style="left:41px;top:239px;" width="16" height="16"><use href="#arch"/></svg><svg class="a" style="left:26px;top:242px;" width="9" height="9"><use href="#plus"/></svg><div class="t" style="left:61px;top:241px">Archives</div><div class="hdots" style="left:31px;top:263px;width:10px"></div><svg class="a" style="left:41px;top:256px;" width="16" height="16"><use href="#inc"/></svg><svg class="a" style="left:26px;top:259px;" width="9" height="9"><use href="#plus"/></svg><div class="t" style="left:61px;top:258px">Includes</div><div class="hdots" style="left:31px;top:280px;width:10px"></div><svg class="a" style="left:41px;top:273px;" width="16" height="16"><use href="#fold"/></svg><svg class="a" style="left:26px;top:276px;" width="9" height="9"><use href="#plus"/></svg><div class="t" style="left:61px;top:275px">bin</div><div class="hdots" style="left:31px;top:297px;width:10px"></div><svg class="a" style="left:41px;top:290px;" width="16" height="16"><use href="#fold"/></svg><svg class="a" style="left:26px;top:293px;" width="9" height="9"><use href="#minus"/></svg><div class="t" style="left:61px;top:292px">src</div><div class="hdots" style="left:50px;top:314px;width:10px"></div><svg class="a" style="left:60px;top:307px;" width="16" height="16"><use href="#lfold"/></svg><svg class="a" style="left:45px;top:310px;" width="9" height="9"><use href="#plus"/></svg><div class="t" style="left:80px;top:309px">arm_kit_libs</div><div class="hdots" style="left:50px;top:331px;width:10px"></div><svg class="a" style="left:60px;top:324px;" width="16" height="16"><use href="#lfold"/></svg><svg class="a" style="left:45px;top:327px;" width="9" height="9"><use href="#plus"/></svg><div class="t" style="left:80px;top:326px">libs</div><div class="hdots" style="left:50px;top:348px;width:10px"></div><svg class="a" style="left:60px;top:341px;" width="16" height="16"><use href="#cfile"/></svg><svg class="a" style="left:45px;top:344px;" width="9" height="9"><use href="#plus"/></svg><div class="t" style="left:80px;top:343px">FuncExecuter.cpp</div><div class="hdots" style="left:50px;top:365px;width:10px"></div><svg class="a" style="left:60px;top:358px;" width="16" height="16"><use href="#hfile"/></svg><svg class="a" style="left:45px;top:361px;" width="9" height="9"><use href="#plus"/></svg><div class="t" style="left:80px;top:360px">FuncExecuter.h</div><div class="hdots" style="left:50px;top:382px;width:10px"></div><svg class="a" style="left:60px;top:375px;" width="16" height="16"><use href="#cfile"/></svg><svg class="a" style="left:45px;top:378px;" width="9" height="9"><use href="#plus"/></svg><div class="t" style="left:80px;top:377px">main.cpp</div><div class="hdots" style="left:50px;top:399px;width:10px"></div><svg class="a" style="left:60px;top:392px;" width="16" height="16"><use href="#cfile"/></svg><svg class="a" style="left:45px;top:395px;" width="9" height="9"><use href="#plus"/></svg><div class="t" style="left:80px;top:394px">SingleMBBuf.cpp</div><div class="hdots" style="left:50px;top:416px;width:10px"></div><svg class="a" style="left:60px;top:409px;" width="16" height="16"><use href="#hfile"/></svg><svg class="a" style="left:45px;top:412px;" width="9" height="9"><use href="#plus"/></svg><div class="t" style="left:80px;top:411px">SingleMBBuf.h</div><div class="hdots" style="left:50px;top:433px;width:10px"></div><svg class="a" style="left:60px;top:426px;" width="16" height="16"><use href="#cfile"/></svg><svg class="a" style="left:45px;top:429px;" width="9" height="9"><use href="#plus"/></svg><div class="t" style="left:80px;top:428px">skd_service.cpp</div><div class="hdots" style="left:50px;top:450px;width:10px"></div><svg class="a" style="left:60px;top:443px;" width="16" height="16"><use href="#hfile"/></svg><svg class="a" style="left:45px;top:446px;" width="9" height="9"><use href="#plus"/></svg><div class="t" style="left:80px;top:445px">skd_service.h</div><div class="hdots" style="left:50px;top:467px;width:10px"></div><svg class="a" style="left:60px;top:460px;" width="16" height="16"><use href="#ui"/></svg><div class="t" style="left:80px;top:462px">skd_service.ui</div><div class="hdots" style="left:31px;top:484px;width:10px"></div><svg class="a" style="left:41px;top:477px;" width="16" height="16"><use href="#fold"/></svg><svg class="a" style="left:26px;top:480px;" width="9" height="9"><use href="#plus"/></svg><div class="t" style="left:61px;top:479px">tmp</div><div class="hdots" style="left:31px;top:501px;width:10px"></div><svg class="a" style="left:41px;top:494px;" width="16" height="16"><use href="#doc"/></svg><div class="t" style="left:61px;top:496px">object_script.SKD_Service.</div><div class="hdots" style="left:31px;top:518px;width:10px"></div><svg class="a" style="left:41px;top:511px;" width="16" height="16"><use href="#doc2"/></svg><div class="t" style="left:61px;top:513px">object_script.SKD_Service.</div><div class="hdots" style="left:31px;top:535px;width:10px"></div><div class="a" style="left:60px;top:527px;width:87px;height:17px;background:#ECE9E2"></div><svg class="a" style="left:41px;top:528px;" width="16" height="16"><use href="#pro"/></svg><div class="t" style="left:61px;top:530px">SKD_Service.pro</div><div class="hdots" style="left:12px;top:552px;width:10px"></div><svg class="a" style="left:22px;top:545px;" width="16" height="16"><use href="#proj"/></svg><div class="t" style="left:42px;top:547px">SKD_V3</div><div class="hdots" style="left:12px;top:569px;width:10px"></div><svg class="a" style="left:22px;top:562px;" width="16" height="16"><use href="#proj"/></svg><div class="t" style="left:42px;top:564px">Tablo5</div><div class="hdots" style="left:12px;top:586px;width:10px"></div><svg class="a" style="left:22px;top:579px;" width="16" height="16"><use href="#proj"/></svg><div class="t" style="left:42px;top:581px">tablo5_learn</div><div class="hdots" style="left:12px;top:603px;width:10px"></div><svg class="a" style="left:22px;top:596px;" width="16" height="16"><use href="#proj"/></svg><div class="t" style="left:42px;top:598px">TblClmnPool</div><div class="hdots" style="left:12px;top:620px;width:10px"></div><svg class="a" style="left:22px;top:613px;" width="16" height="16"><use href="#proj"/></svg><div class="t" style="left:42px;top:615px">TcpClient_v!_00</div><div class="hdots" style="left:12px;top:637px;width:10px"></div><svg class="a" style="left:22px;top:630px;" width="16" height="16"><use href="#proj"/></svg><div class="t" style="left:42px;top:632px">TcpDataProxy</div><div class="hdots" style="left:12px;top:654px;width:10px"></div><svg class="a" style="left:22px;top:647px;" width="16" height="16"><use href="#proj"/></svg><div class="t" style="left:42px;top:649px">TcpDebugLog</div><div class="hdots" style="left:12px;top:671px;width:10px"></div><svg class="a" style="left:22px;top:664px;" width="16" height="16"><use href="#proj"/></svg><div class="t" style="left:42px;top:666px">TcpServer_v1_00</div><div class="hdots" style="left:12px;top:688px;width:10px"></div><svg class="a" style="left:22px;top:681px;" width="16" height="16"><use href="#proj"/></svg><div class="t" style="left:42px;top:683px">Terminal_VSDP_Arm</div><div class="hdots" style="left:12px;top:705px;width:10px"></div><svg class="a" style="left:22px;top:698px;" width="16" height="16"><use href="#proj"/></svg><div class="t" style="left:42px;top:700px">test_dll</div><div class="hdots" style="left:12px;top:722px;width:10px"></div><svg class="a" style="left:22px;top:715px;" width="16" height="16"><use href="#proj"/></svg><div class="t" style="left:42px;top:717px">Test_GUI</div><div class="hdots" style="left:12px;top:739px;width:10px"></div><svg class="a" style="left:22px;top:732px;" width="16" height="16"><use href="#proj"/></svg><div class="t" style="left:42px;top:734px">test2</div><div class="hdots" style="left:12px;top:756px;width:10px"></div><svg class="a" style="left:22px;top:749px;" width="16" height="16"><use href="#proj"/></svg><div class="t" style="left:42px;top:751px">TestList</div><div class="hdots" style="left:12px;top:773px;width:10px"></div><svg class="a" style="left:22px;top:766px;" width="16" height="16"><use href="#proj"/></svg><div class="t" style="left:42px;top:768px">TestQSettings</div><div class="hdots" style="left:12px;top:790px;width:10px"></div><svg class="a" style="left:22px;top:783px;" width="16" height="16"><use href="#proj"/></svg><div class="t" style="left:42px;top:785px">TestQTableView</div><div class="hdots" style="left:12px;top:807px;width:10px"></div><svg class="a" style="left:22px;top:800px;" width="16" height="16"><use href="#proj"/></svg><div class="t" style="left:42px;top:802px">TestRef</div><div class="hdots" style="left:12px;top:824px;width:10px"></div><svg class="a" style="left:22px;top:817px;" width="16" height="16"><use href="#proj"/></svg><div class="t" style="left:42px;top:819px">TestX</div></div><div class="a" style="left:200px;top:156px;width:15px;height:820px;background:#fdfdfb"></div><div class="vbtn" style="left:200px;top:156px;width:15px;height:16px"></div><svg class="a" style="left:203px;top:161px" width="9" height="6"><path d="M1 5l3.5-3.5L8 5" fill="none" stroke="#3a3a3a" stroke-width="2"/></svg><div class="vbtn" style="left:200px;top:312px;width:15px;height:516px"></div><div class="a" style="left:204px;top:567px;width:7px;height:7px;background:repeating-linear-gradient(#9a9a8e 0 1px,transparent 1px 2px)"></div><div class="vbtn" style="left:200px;top:959px;width:15px;height:16px"></div><svg class="a" style="left:203px;top:965px" width="9" height="6"><path d="M1 1l3.5 3.5L8 1" fill="none" stroke="#3a3a3a" stroke-width="2"/></svg><div class="a" style="left:7px;top:976px;width:193px;height:16px;background:#fdfdfb"></div><div class="hbtn" style="left:7px;top:976px;width:16px;height:15px"></div><svg class="a" style="left:12px;top:979px" width="6" height="9"><path d="M5 1L1.5 4.5 5 8" fill="none" stroke="#3a3a3a" stroke-width="2"/></svg><div class="hbtn" style="left:23px;top:976px;width:131px;height:15px"></div><div class="a" style="left:85px;top:980px;width:7px;height:7px;background:repeating-linear-gradient(90deg,#9a9a8e 0 1px,transparent 1px 2px)"></div><div class="hbtn" style="left:183px;top:976px;width:16px;height:15px"></div><svg class="a" style="left:188px;top:979px" width="6" height="9"><path d="M1 1l3.5 3.5L1 8" fill="none" stroke="#3a3a3a" stroke-width="2"/></svg><div class="a" style="left:221px;top:102px;width:1026px;height:663px;border:1px solid #aca899;border-radius:7px 7px 0 0"></div><svg class="a" style="left:220px;top:103px" width="8" height="25"><path d="M0.5 25V8Q0.5 1.5 7 0.5" fill="none" stroke="#aca899"/></svg><svg class="a" style="left:225px;top:107px;" width="16" height="16"><use href="#cfile"/></svg><div class="t" style="left:245px;top:110px">main.cpp</div><svg class="a" style="left:315px;top:103px" width="8" height="25"><path d="M0.5 25V8Q0.5 1.5 7 0.5" fill="none" stroke="#aca899"/></svg><svg class="a" style="left:318px;top:107px;" width="16" height="16"><use href="#cfile"/></svg><div class="t" style="left:338px;top:110px">SingleMBBuf.cpp</div><svg class="a" style="left:443px;top:103px" width="8" height="25"><path d="M0.5 25V8Q0.5 1.5 7 0.5" fill="none" stroke="#aca899"/></svg><svg class="a" style="left:447px;top:107px;" width="16" height="16"><use href="#hfile"/></svg><div class="t" style="left:467px;top:110px">SingleMBBuf.h</div><svg class="a" style="left:561px;top:103px" width="8" height="25"><path d="M0.5 25V8Q0.5 1.5 7 0.5" fill="none" stroke="#aca899"/></svg><svg class="a" style="left:565px;top:107px;" width="16" height="16"><use href="#cfile"/></svg><div class="t" style="left:585px;top:110px">MBBuf.cpp</div><svg class="a" style="left:662px;top:103px" width="8" height="25"><path d="M0.5 25V8Q0.5 1.5 7 0.5" fill="none" stroke="#aca899"/></svg><svg class="a" style="left:667px;top:107px;" width="16" height="16"><use href="#hfile"/></svg><div class="t" style="left:686px;top:110px">MBBuf.h</div><svg class="a" style="left:753px;top:103px" width="8" height="25"><path d="M0.5 25V8Q0.5 1.5 7 0.5" fill="none" stroke="#aca899"/></svg><svg class="a" style="left:757px;top:107px;" width="16" height="16"><use href="#cfile"/></svg><div class="t" style="left:776px;top:110px">except.h</div><svg class="a" style="left:846px;top:103px" width="8" height="25"><path d="M0.5 25V8Q0.5 1.5 7 0.5" fill="none" stroke="#aca899"/></svg><svg class="a" style="left:850px;top:107px;" width="16" height="16"><use href="#cfile"/></svg><div class="t" style="left:869px;top:110px">except.cpp</div><svg class="a" style="left:949px;top:103px" width="8" height="25"><path d="M0.5 25V8Q0.5 1.5 7 0.5" fill="none" stroke="#aca899"/></svg><svg class="a" style="left:954px;top:107px;" width="16" height="16"><use href="#hfile"/></svg><div class="t" style="left:973px;top:110px">log.h</div><svg class="a" style="left:1023px;top:102px" width="160" height="27"><defs><linearGradient id="tabp" x1="0" y1="0" x2="0" y2="1"><stop offset="0" stop-color="#f0dcf0"/><stop offset="0.55" stop-color="#c88ac8"/><stop offset="0.8" stop-color="#b262b2"/><stop offset="1" stop-color="#af5eaf"/></linearGradient></defs><path d="M0.5 27V8Q0.5 0.5 8 0.5H117C126 0.5 131 7 137 14 C143 21 146 24.5 152 24.5 V27Z" fill="url(#tabp)"/><path d="M0.5 27V8Q0.5 0.5 8 0.5H117C126 0.5 131 7 137 14 C143 21 146 24.5 152 24.5" fill="none" stroke="#aca899"/></svg><svg class="a" style="left:1027px;top:107px;" width="16" height="16"><use href="#pro"/></svg><div class="t" style="left:1046px;top:110px">SKD_Service.pro</div><svg class="a" style="left:1135px;top:110px" width="10" height="10"><path d="M1.5 1.5l7 7M8.5 1.5l-7 7" stroke="#8a8a8a" stroke-width="3"/><path d="M1.5 1.5l7 7M8.5 1.5l-7 7" stroke="#fff" stroke-width="1.6"/></svg><svg class="a" style="left:1171px;top:106px" width="10" height="7"><path d="M1 1l3 2.5-3 2.5M5 1l3 2.5-3 2.5" fill="none" stroke="#000" stroke-width="1.6"/></svg><div class="t" style="left:1178px;top:109px;font-size:9.5px">8</div><div class="minb" style="left:1211px;top:108px"></div><div class="maxb" style="left:1229px;top:108px"></div><div class="a" style="left:1250px;top:104px;width:27px;height:71px;border:1px solid #fff;border-radius:6px 6px 10px 10px"></div><div class="a" style="left:1256px;top:111px;width:17px;height:1px;background:repeating-linear-gradient(90deg,#a0a0a0 0 2px,transparent 2px 4px)"></div><svg class="a" style="left:1259px;top:126px;" width="9" height="9"><use href="#restore"/></svg><svg class="a" style="left:1256px;top:145px;" width="16" height="16"><use href="#outline"/></svg><div class="a" style="left:222px;top:128px;width:1024px;height:636px;border:2px solid #af5eaf;background:#ECE9E2"></div><div class="a" style="left:236px;top:130px;width:980px;height:616px;background:#b8eeb5"></div><div class="a" style="left:252px;top:130px;width:1px;height:616px;background:#d8f4d8"></div><div class="a" style="left:1216px;top:130px;width:15px;height:616px;background:#fcfafa"></div><div class="vbtn" style="left:1216px;top:130px;width:15px;height:16px"></div><svg class="a" style="left:1219px;top:135px" width="9" height="6"><path d="M1 5l3.5-3.5L8 5" fill="none" stroke="#3a3a3a" stroke-width="2"/></svg><div class="vbtn" style="left:1216px;top:146px;width:15px;height:325px"></div><div class="a" style="left:1220px;top:305px;width:7px;height:7px;background:repeating-linear-gradient(#9a9a8e 0 1px,transparent 1px 2px)"></div><div class="vbtn" style="left:1216px;top:730px;width:15px;height:16px"></div><svg class="a" style="left:1219px;top:735px" width="9" height="6"><path d="M1 1l3.5 3.5L8 1" fill="none" stroke="#3a3a3a" stroke-width="2"/></svg><div class="a" style="left:253px;top:746px;width:962px;height:16px;background:#fcfafa;border-top:1px solid #eceae4"></div><div class="a" style="left:253px;top:746px;width:16px;height:16px;background:#fffdf4;border:1px solid #e0dcc8"></div><svg class="a" style="left:258px;top:750px" width="6" height="9"><path d="M5 1L1.5 4.5 5 8" fill="none" stroke="#d0d0d0" stroke-width="1.6"/></svg><div class="a" style="left:1199px;top:746px;width:16px;height:16px;background:#fffdf4;border:1px solid #e0dcc8"></div><svg class="a" style="left:1204px;top:750px" width="6" height="9"><path d="M1 1l3.5 3.5L1 8" fill="none" stroke="#d0d0d0" stroke-width="1.6"/></svg><div class="a" style="left:236px;top:130px;width:980px;height:616px;overflow:hidden"><div class="t mono ln" style="left:0;top:2px;width:16px;text-align:right">1</div><div class="t mono" style="left:18px;top:2px">ARM_KIT_DIR = D:/Projects/eclipse/arm_kit_libs</div><div class="t mono ln" style="left:0;top:19px;width:16px;text-align:right">2</div><div class="t mono" style="left:18px;top:19px">ARM_KIT_SRC = $$ARM_KIT_DIR/src</div><div class="t mono ln" style="left:0;top:36px;width:16px;text-align:right">3</div><div class="t mono" style="left:18px;top:36px">CRYPTOPP_DIR = D:/Soft/Libraries/cryptopp</div><div class="t mono ln" style="left:0;top:53px;width:16px;text-align:right">4</div><div class="t mono" style="left:18px;top:53px">LOKI_DIR = D:/Soft/Libraries/loki-0.1.6</div><div class="t mono ln" style="left:0;top:70px;width:16px;text-align:right">5</div><div class="t mono" style="left:18px;top:70px"><span class="kw">TEMPLATE</span> = app</div><div class="t mono ln" style="left:0;top:87px;width:16px;text-align:right">6</div><div class="t mono" style="left:18px;top:87px"><span class="kw">TARGET</span> = SKD_Service</div><div class="t mono ln" style="left:0;top:104px;width:16px;text-align:right">7</div><div class="t mono" style="left:18px;top:104px"><span class="kw">QT</span> += core \</div><div class="t mono ln" style="left:0;top:121px;width:16px;text-align:right">8</div><div class="t mono" style="left:18px;top:121px">    gui \</div><div class="t mono ln" style="left:0;top:138px;width:16px;text-align:right">9</div><div class="t mono" style="left:18px;top:138px">    sql \</div><div class="t mono ln" style="left:0;top:155px;width:16px;text-align:right">10</div><div class="t mono" style="left:18px;top:155px">    xml \</div><div class="t mono ln" style="left:0;top:172px;width:16px;text-align:right">11</div><div class="t mono" style="left:18px;top:172px">    network</div><div class="t mono ln" style="left:0;top:189px;width:16px;text-align:right">12</div><div class="t mono" style="left:18px;top:189px"><span class="kw">HEADERS</span> += src/FuncExecuter.h \</div><div class="t mono ln" style="left:0;top:206px;width:16px;text-align:right">13</div><div class="t mono" style="left:18px;top:206px">    src/SingleMBBuf.h \</div><div class="t mono ln" style="left:0;top:223px;width:16px;text-align:right">14</div><div class="t mono" style="left:18px;top:223px">    $$ARM_KIT_SRC/arm_kit/single.h \</div><div class="t mono ln" style="left:0;top:240px;width:16px;text-align:right">15</div><div class="t mono" style="left:18px;top:240px">    $$ARM_KIT_SRC/arm_kit/nocopy.h \</div><div class="t mono ln" style="left:0;top:257px;width:16px;text-align:right">16</div><div class="t mono" style="left:18px;top:257px">    $$ARM_KIT_SRC/arm_kit/crypter.h \</div><div class="t mono ln" style="left:0;top:274px;width:16px;text-align:right">17</div><div class="t mono" style="left:18px;top:274px">    $$ARM_KIT_SRC/arm_kit/db_con.h \</div><div class="t mono ln" style="left:0;top:291px;width:16px;text-align:right">18</div><div class="t mono" style="left:18px;top:291px">    $$ARM_KIT_SRC/arm_kit/dbg_stack.h \</div><div class="t mono ln" style="left:0;top:308px;width:16px;text-align:right">19</div><div class="t mono" style="left:18px;top:308px">    $$ARM_KIT_SRC/arm_kit/debug_log.h \</div><div class="t mono ln" style="left:0;top:325px;width:16px;text-align:right">20</div><div class="t mono" style="left:18px;top:325px">    $$ARM_KIT_SRC/arm_kit/debug_wgt.h \</div><div class="t mono ln" style="left:0;top:342px;width:16px;text-align:right">21</div><div class="t mono" style="left:18px;top:342px">    $$ARM_KIT_SRC/arm_kit/defines.h \</div><div class="t mono ln" style="left:0;top:359px;width:16px;text-align:right">22</div><div class="t mono" style="left:18px;top:359px">    $$ARM_KIT_SRC/arm_kit/except.h \</div><div class="t mono ln" style="left:0;top:376px;width:16px;text-align:right">23</div><div class="t mono" style="left:18px;top:376px">    $$ARM_KIT_SRC/arm_kit/except_dlg.h \</div><div class="t mono ln" style="left:0;top:393px;width:16px;text-align:right">24</div><div class="t mono" style="left:18px;top:393px">    $$ARM_KIT_SRC/arm_kit/TblClmnPool.h \</div><div class="t mono ln" style="left:0;top:410px;width:16px;text-align:right">25</div><div class="t mono" style="left:18px;top:410px">    $$ARM_KIT_SRC/arm_kit/TblColumn.h \</div><div class="t mono ln" style="left:0;top:427px;width:16px;text-align:right">26</div><div class="t mono" style="left:18px;top:427px">    $$ARM_KIT_SRC/arm_kit/MBBuf.h \</div><div class="t mono ln" style="left:0;top:444px;width:16px;text-align:right">27</div><div class="t mono" style="left:18px;top:444px">    src/skd_service.h</div><div class="t mono ln" style="left:0;top:461px;width:16px;text-align:right">28</div><div class="t mono" style="left:18px;top:461px"><span class="kw">SOURCES</span> += src/FuncExecuter.cpp \</div><div class="t mono ln" style="left:0;top:478px;width:16px;text-align:right">29</div><div class="t mono" style="left:18px;top:478px">    src/SingleMBBuf.cpp \</div><div class="t mono ln" style="left:0;top:495px;width:16px;text-align:right">30</div><div class="t mono" style="left:18px;top:495px">    src/main.cpp \</div><div class="t mono ln" style="left:0;top:512px;width:16px;text-align:right">31</div><div class="t mono" style="left:18px;top:512px">    $$ARM_KIT_SRC/arm_kit/crypter.cpp \</div><div class="t mono ln" style="left:0;top:529px;width:16px;text-align:right">32</div><div class="t mono" style="left:18px;top:529px">    $$ARM_KIT_SRC/arm_kit/db_con.cpp \</div><div class="t mono ln" style="left:0;top:546px;width:16px;text-align:right">33</div><div class="t mono" style="left:18px;top:546px">    $$ARM_KIT_SRC/arm_kit/dbg_stack.cpp \</div><div class="t mono ln" style="left:0;top:563px;width:16px;text-align:right">34</div><div class="t mono" style="left:18px;top:563px">    $$ARM_KIT_SRC/arm_kit/debug_log.cpp \</div><div class="t mono ln" style="left:0;top:580px;width:16px;text-align:right">35</div><div class="t mono" style="left:18px;top:580px">    $$ARM_KIT_SRC/arm_kit/debug_wgt.cpp \</div><div class="t mono ln" style="left:0;top:597px;width:16px;text-align:right">36</div><div class="t mono" style="left:18px;top:597px">    $$ARM_KIT_SRC/arm_kit/except.cpp \</div></div><div class="a" style="left:221px;top:768px;width:1025px;height:226px;border:1px solid #aca899;border-radius:7px 7px 0 0"></div><svg class="a" style="left:222px;top:769px" width="1023" height="25"><defs><linearGradient id="tabw2" x1="0" y1="0" x2="0" y2="1"><stop offset="0" stop-color="#ffffff"/><stop offset="1" stop-color="#ECE9E2"/></linearGradient></defs><path d="M0 24 V6 Q0 0 7 0 H83 C 91 0, 95 6, 100 12 C 105 19, 109 23.5, 115 23.5 Z" fill="url(#tabw2)"/><path d="M83 0.5 C 91 0.5, 95 6, 100 12 C 105 19, 109 23.5, 115 23.5 H1023" fill="none" stroke="#aca899"/></svg><svg class="a" style="left:226px;top:773px;" width="16" height="16"><use href="#problems"/></svg><div class="t" style="left:244px;top:776px;">Problems</div><svg class="a" style="left:332px;top:773px;" width="16" height="16"><use href="#console"/></svg><div class="t" style="left:350px;top:776px;font-weight:bold;">Console</div><svg class="a" style="left:391px;top:769px" width="8" height="24"><path d="M0 0.5Q7 1 7.5 8V24" fill="none" stroke="#aca899"/></svg><svg class="a" style="left:404px;top:773px;" width="16" height="16"><use href="#tasks"/></svg><div class="t" style="left:423px;top:776px;">Tasks</div><svg class="a" style="left:446px;top:769px" width="8" height="24"><path d="M0 0.5Q7 1 7.5 8V24" fill="none" stroke="#aca899"/></svg><svg class="a" style="left:460px;top:773px;" width="16" height="16"><use href="#typeh"/></svg><div class="t" style="left:477px;top:776px;">Type Hierarchy</div><svg class="a" style="left:547px;top:769px" width="8" height="24"><path d="M0 0.5Q7 1 7.5 8V24" fill="none" stroke="#aca899"/></svg><svg class="a" style="left:560px;top:773px;" width="16" height="16"><use href="#bug"/></svg><div class="t" style="left:578px;top:776px;">Debug</div><svg class="a" style="left:606px;top:769px" width="8" height="24"><path d="M0 0.5Q7 1 7.5 8V24" fill="none" stroke="#aca899"/></svg><svg class="a" style="left:618px;top:773px;" width="16" height="16"><use href="#search"/></svg><div class="t" style="left:637px;top:776px;">Search</div><svg class="a" style="left:667px;top:769px" width="8" height="24"><path d="M0 0.5Q7 1 7.5 8V24" fill="none" stroke="#aca899"/></svg><svg class="a" style="left:679px;top:773px;" width="16" height="16"><use href="#progress"/></svg><div class="t" style="left:698px;top:776px;">Progress</div><svg class="a" style="left:737px;top:769px" width="8" height="24"><path d="M0 0.5Q7 1 7.5 8V24" fill="none" stroke="#aca899"/></svg><svg class="a" style="left:750px;top:773px;" width="16" height="16"><use href="#errlog"/></svg><div class="t" style="left:768px;top:776px;">Error Log</div><svg class="a" style="left:809px;top:769px" width="8" height="24"><path d="M0 0.5Q7 1 7.5 8V24" fill="none" stroke="#aca899"/></svg><svg class="a" style="left:296px;top:776px" width="10" height="10"><path d="M1.5 1.5l7 7M8.5 1.5l-7 7" stroke="#8f8d80" stroke-width="3.2" stroke-linecap="square"/><path d="M1.5 1.5l7 7M8.5 1.5l-7 7" stroke="#fff" stroke-width="1.3"/></svg><svg class="a" style="left:1168px;top:774px;" width="16" height="16"><use href="#ballsgray"/></svg><svg class="a" style="left:1192px;top:774px" width="11" height="6"><path d="M0.5 0.5h10l-5 5z" fill="#fff" stroke="#5a5a5a"/></svg><div class="minb" style="left:1211px;top:774px"></div><div class="maxb" style="left:1229px;top:774px"></div><div class="t" style="left:224px;top:797px">0 items</div><div class="a" style="left:222px;top:810px;width:1023px;height:1px;background:#aca899"></div><div class="a" style="left:224px;top:811px;width:1021px;height:20px;background:linear-gradient(#f6f4ee,#ebe8dc 70%,#dedbce);border-bottom:1px solid #c8c4b4"></div><div class="a" style="left:721px;top:814px;width:1px;height:14px;background:#cbc7b8;border-right:1px solid #fff"></div><div class="a" style="left:829px;top:814px;width:1px;height:14px;background:#cbc7b8;border-right:1px solid #fff"></div><div class="a" style="left:883px;top:814px;width:1px;height:14px;background:#cbc7b8;border-right:1px solid #fff"></div><div class="t" style="left:235px;top:815px">Description</div><svg class="a" style="left:298px;top:817px" width="9" height="5"><path d="M0 5L4.5 0 9 5z" fill="#c0bcac"/></svg><div class="t" style="left:731px;top:815px">Resource</div><div class="t" style="left:839px;top:815px">Path</div><div class="t" style="left:892px;top:815px">Location</div><div class="a" style="left:224px;top:831px;width:498px;height:145px;background:repeating-linear-gradient(#f5f5f5 0 15px,#fafafa 15px 16px)"></div><div class="a" style="left:722px;top:831px;width:523px;height:145px;background:repeating-linear-gradient(#fff 0 15px,#f8f8f4 15px 16px)"></div><div class="a" style="left:829px;top:831px;width:1px;height:145px;background:#f6f6f2"></div><div class="a" style="left:883px;top:831px;width:1px;height:145px;background:#f6f6f2"></div><div class="a" style="left:224px;top:976px;width:1021px;height:15px;background:#fdfdfb"></div><div class="hbtn" style="left:224px;top:976px;width:16px;height:15px"></div><svg class="a" style="left:229px;top:979px" width="6" height="9"><path d="M5 1L1.5 4.5 5 8" fill="none" stroke="#3a3a3a" stroke-width="2"/></svg><div class="hbtn" style="left:240px;top:976px;width:841px;height:15px"></div><div class="a" style="left:656px;top:980px;width:7px;height:7px;background:repeating-linear-gradient(90deg,#9a9a8e 0 1px,transparent 1px 2px)"></div><div class="hbtn" style="left:1228px;top:976px;width:16px;height:15px"></div><svg class="a" style="left:1233px;top:979px" width="6" height="9"><path d="M1 1l3.5 3.5L1 8" fill="none" stroke="#3a3a3a" stroke-width="2"/></svg><div class="grip" style="left:6px;top:1000px;height:18px"></div><svg class="a" style="left:19px;top:1000px;" width="16" height="16"><use href="#fastview"/></svg><div class="grip" style="left:903px;top:998px;height:18px"></div><div class="a" style="left:910px;top:996px;width:96px;height:23px;border:1px solid #c8c4b4;background:#ECE9E2"></div><div class="a" style="left:911px;top:997px;width:35px;height:21px;background:#fafae0;border-right:1px solid #908c80"></div><div class="t" style="left:930px;top:1002px">22M of 58M</div><div class="a" style="left:1005px;top:996px;width:17px;height:23px;border:1px solid #c8c4b4;background:#ECE9E2"></div><svg class="a" style="left:1007px;top:999px;" width="12" height="16"><use href="#trash"/></svg><div class="grip" style="left:1028px;top:998px;height:18px"></div>
</body></html>
